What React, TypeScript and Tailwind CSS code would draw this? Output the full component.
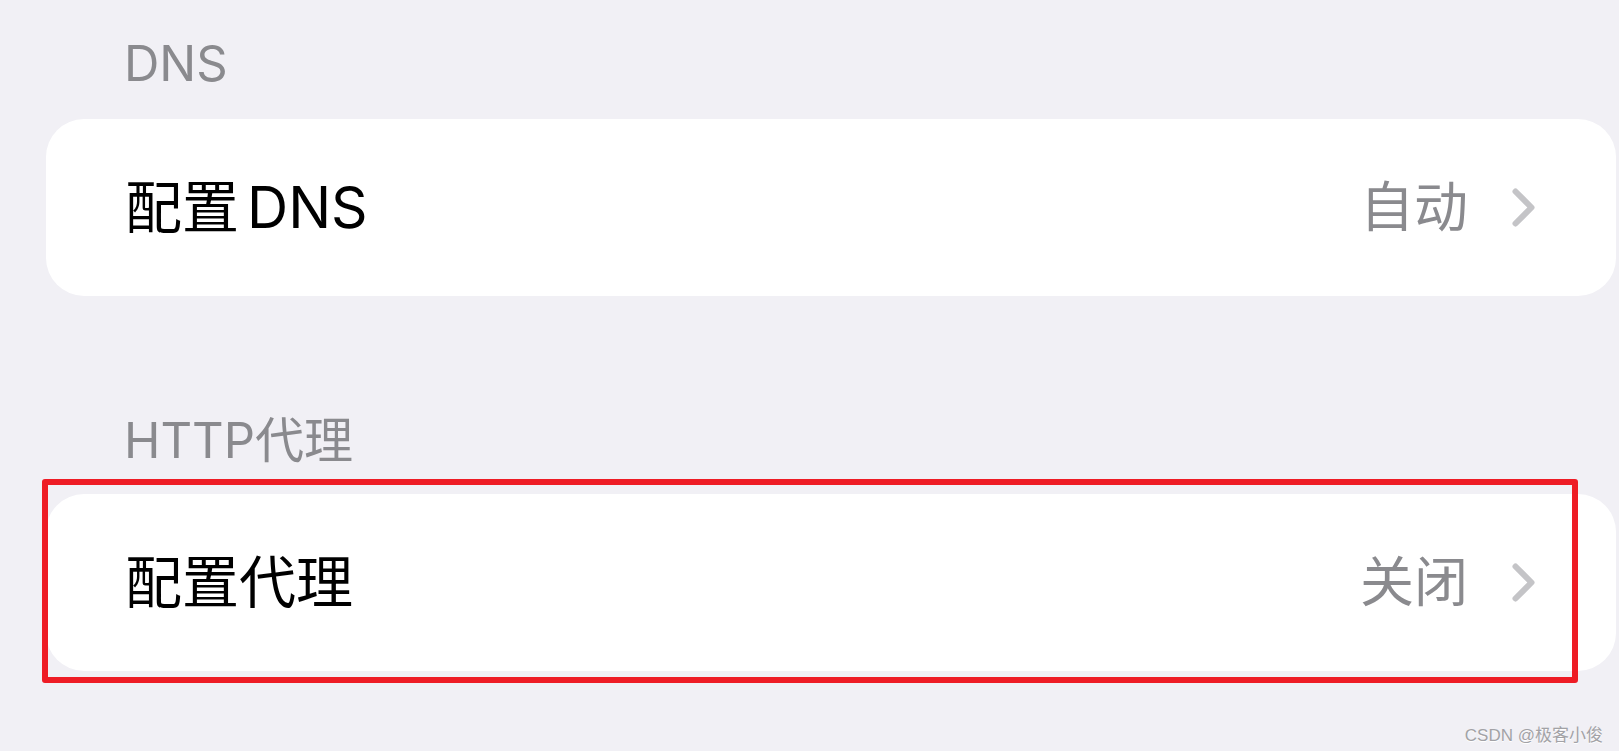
import React from 'react';

const font = { fontFamily: 'Inter, "Noto Sans CJK SC", sans-serif' };

function Chevron() {
  return (
    <svg width="23" height="39" viewBox="0 0 23 39" className="shrink-0">
      <polyline
        points="3.5,3.5 19.5,19.5 3.5,35.5"
        fill="none"
        stroke="#c4c4c7"
        strokeWidth="6"
        strokeLinecap="round"
        strokeLinejoin="round"
      />
    </svg>
  );
}

function Row({ title, value, highlight }: { title: React.ReactNode; value: string; highlight?: boolean }) {
  return (
    <div className="relative">
      <div className="h-[177px] bg-white rounded-[38px] flex items-center pl-[79px] pr-[81px]">
        <span className="text-[57px] leading-none text-black">{title}</span>
        <span className="ml-auto text-[54px] leading-none text-[#8a8a8e] mr-[44px]">{value}</span>
        <Chevron />
      </div>
      {highlight && (
        <div className="absolute left-[-4px] top-[-15px] right-[38px] bottom-[-12px] border-[6px] border-[#ee1c25] rounded-[3px] pointer-events-none" />
      )}
    </div>
  );
}

export default function App() {
  return (
    <div className="relative w-full h-[751px] bg-[#f1f0f5] overflow-hidden pl-[46px] pr-[3px]" style={font}>
      <div className="h-[119px] pt-[39px] pl-[78px]">
        <span className="text-[49px] leading-[49px] text-[#8a8a8e]">DNS</span>
      </div>
      <Row
        title={
          <>
            配置<span className="ml-[8px]">DNS</span>
          </>
        }
        value="自动"
      />
      <div className="h-[198px] pt-[120px] pl-[78px]">
        <span className="text-[49px] leading-[49px] text-[#8a8a8e]">HTTP代理</span>
      </div>
      <Row title="配置代理" value="关闭" highlight />
      <div className="absolute right-[16px] bottom-[7px] text-[17px] leading-none text-[#a2a2a6] [text-shadow:0_1px_0_#ffffff]" style={{ fontFamily: '"Liberation Sans", "Noto Sans CJK SC", sans-serif' }}>
        CSDN @极客小俊
      </div>
    </div>
  );
}
